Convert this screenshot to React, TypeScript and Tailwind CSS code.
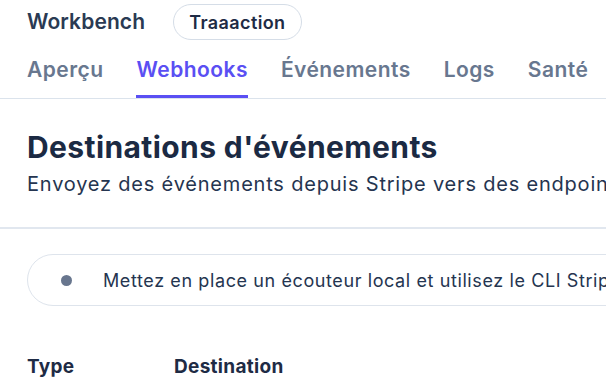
import React from "react";

export default function App() {
  const tabs = ["Aperçu", "Webhooks", "Événements", "Logs", "Santé"];
  return (
    <div
      className="w-[606px] h-[392px] overflow-hidden bg-white text-[#1e2b45]"
      style={{ fontFamily: "Inter, 'Noto Sans', sans-serif" }}
    >
      <div className="flex items-center h-[44px] pl-[27px] gap-[28px]">
        <span className="text-[21px] font-semibold text-[#2a3a53] tracking-[0.1px]">Workbench</span>
        <span className="h-[36px] px-[15px] flex items-center rounded-full border border-[#d5dde7] text-[18px] tracking-[0.4px] font-semibold text-[#1e2b45]">
          Traaaction
        </span>
      </div>
      <div className="flex h-[55px] border-b border-[#dbe3ec] pl-[27px] gap-[33px] whitespace-nowrap">
        {tabs.map((t) => (
          <div
            key={t}
            className={
              t === "Webhooks"
                ? "flex items-center h-full border-b-[3px] border-[#5a4ff3] -mb-[2px] pt-[1px] text-[21px] tracking-[0.45px] font-semibold text-[#5a4ff3]"
                : "flex items-center h-full pb-[2px] text-[21px] tracking-[0.45px] font-semibold text-[#68778f]"
            }
          >
            {t}
          </div>
        ))}
      </div>
      <div className="pl-[27px] pt-[30px] whitespace-nowrap">
        <h1 className="text-[30px] font-bold leading-[36px] tracking-[0.4px] text-[#1b2a43]">Destinations d'événements</h1>
        <p className="text-[20px] leading-[26px] mt-[6px] tracking-[0.8px] text-[#253550]">
          Envoyez des événements depuis Stripe vers des endpoints
        </p>
      </div>
      <div className="mt-[30px] h-[2px] bg-[#e1e7ef]"></div>
      <div className="pl-[27px] pt-[25px]">
        <div className="h-[52px] w-[640px] rounded-full border border-[#dee4ec] flex items-center whitespace-nowrap">
          <span className="ml-[33px] w-[11px] h-[11px] rounded-full bg-[#68768e]"></span>
          <span className="ml-[31px] text-[18px] tracking-[0.6px] text-[#253550]">
            Mettez en place un écouteur local et utilisez le CLI Stripe
          </span>
        </div>
      </div>
      <div className="flex pl-[27px] pt-[47px] text-[19px] tracking-[0.3px] font-bold text-[#1e2b45]">
        <span className="w-[147px]">Type</span>
        <span>Destination</span>
      </div>
    </div>
  );
}
